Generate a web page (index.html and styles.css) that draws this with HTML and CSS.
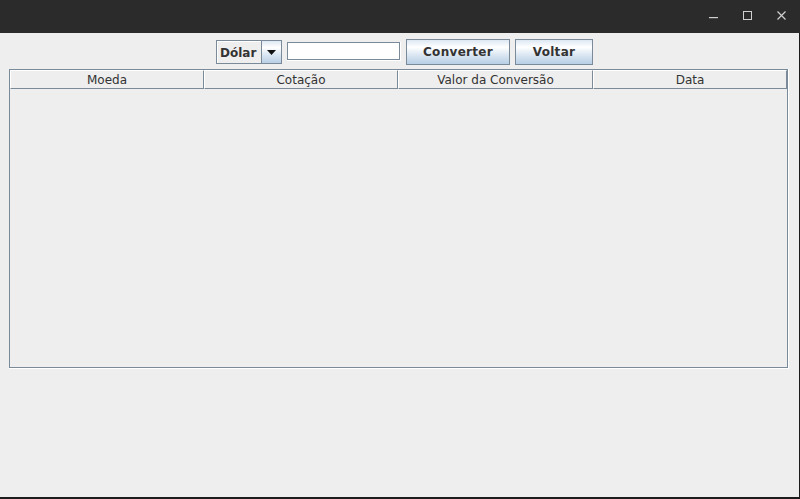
FILE: index.html
```html
<!DOCTYPE html>
<html lang="pt">
<head>
<meta charset="utf-8">
<title>Conversor</title>
<link rel="stylesheet" href="styles.css">
</head>
<body>
<div class="window">
  <div class="titlebar">
    <div class="ctl">
      <svg width="9" height="9" viewBox="0 0 9 9"><rect x="0" y="6" width="9" height="1.2" fill="#cfcfcf"/></svg>
    </div>
    <div class="ctl">
      <svg width="9" height="9" viewBox="0 0 9 9"><rect x="0.5" y="0.5" width="8" height="8" fill="none" stroke="#cfcfcf" stroke-width="1"/></svg>
    </div>
    <div class="ctl">
      <svg width="9" height="9" viewBox="0 0 9 9"><path d="M0.5 0.5 L8.5 8.5 M8.5 0.5 L0.5 8.5" stroke="#cfcfcf" stroke-width="1.2" fill="none"/></svg>
    </div>
  </div>
  <div class="content">
    <div class="toolbar">
      <div class="combo">
        <span class="combo-text">Dólar</span>
        <span class="combo-btn"><svg width="9" height="5" viewBox="0 0 9 5"><path d="M0 0 H9 L4.5 5 Z" fill="#111"/></svg></span>
      </div>
      <div class="field"><div class="field-inner"></div></div>
      <button class="btn btn-conv">Converter</button>
      <button class="btn btn-volt">Voltar</button>
    </div>
    <div class="scroll">
      <div class="scroll-inner">
        <div class="thead">
          <div class="th">Moeda</div>
          <div class="th">Cotação</div>
          <div class="th">Valor da Conversão</div>
          <div class="th">Data</div>
        </div>
        <div class="tbody"></div>
      </div>
    </div>
  </div>
</div>
</body>
</html>
```

FILE: styles.css
```css
html, body {
  margin: 0;
  padding: 0;
  background: #1c1c1c;
}
.window {
  width: 800px;
  height: 499px;
  background: #1c1c1c;
  display: flex;
  flex-direction: column;
  font-family: "DejaVu Sans", sans-serif;
  font-size: 12px;
  color: #333333;
}
.titlebar {
  height: 33px;
  background: #2b2b2b;
  display: flex;
  justify-content: flex-end;
  align-items: flex-start;
  padding-right: 2px;
}
.ctl {
  width: 34px;
  height: 33px;
  display: flex;
  justify-content: center;
  padding-top: 11px;
  box-sizing: border-box;
}
.ctl svg { display: block; }
.content {
  width: 799px;
  height: 464px;
  background: #eeeeee;
}
.toolbar {
  height: 36px;
  box-sizing: border-box;
  padding-top: 6px;
  padding-left: 10px;
  display: flex;
  justify-content: center;
  align-items: flex-start;
  gap: 5px;
}
.combo {
  margin-top: 1px;
  width: 66px;
  height: 24px;
  box-sizing: border-box;
  border: 1px solid #7a8a99;
  display: flex;
  background: #eeeeee;
}
.combo-text {
  flex: 1;
  display: flex;
  align-items: center;
  padding-left: 2px;
  font-weight: bold;
  font-size: 12px;
  color: #333333;
  border-top: 1px solid #ffffff;
  border-left: 1px solid #ffffff;
}
.combo-btn {
  width: 19px;
  border-left: 1px solid #7a8a99;
  display: flex;
  align-items: center;
  justify-content: center;
  background: linear-gradient(to bottom, #dde8f3 0%, #ffffff 30%, #dde8f3 60%, #b8cfe5 100%);
}
.combo-btn svg { display: block; }
.field {
  margin-top: 3px;
  width: 114px;
  height: 19px;
  box-sizing: border-box;
  border-right: 1px solid #ffffff;
  border-bottom: 1px solid #ffffff;
}
.field-inner {
  height: 100%;
  box-sizing: border-box;
  border: 1px solid #7a8a99;
  background: #ffffff;
}
.btn {
  height: 26px;
  margin: 0;
  padding: 0;
  box-sizing: border-box;
  border: 1px solid #7a8a99;
  background: linear-gradient(to bottom, #dde8f3 0%, #ffffff 30%, #dde8f3 60%, #b8cfe5 100%);
  font-family: "DejaVu Sans", sans-serif;
  font-size: 12px;
  font-weight: bold;
  color: #333333;
  letter-spacing: 0.3px;
}
.btn-conv { width: 104px; }
.btn-volt { width: 78px; }
.scroll {
  margin-left: 9px;
  width: 780px;
  height: 300px;
  box-sizing: border-box;
  border-right: 1px solid #ffffff;
  border-bottom: 1px solid #ffffff;
}
.scroll-inner {
  height: 100%;
  box-sizing: border-box;
  border: 1px solid #7a8a99;
  display: flex;
  flex-direction: column;
}
.thead {
  display: grid;
  grid-template-columns: 194px 194px 195px 194px;
  height: 19px;
}
.th {
  box-sizing: border-box;
  border-top: 1px solid #ffffff;
  border-left: 1px solid #ffffff;
  border-right: 1px solid #7a8a99;
  border-bottom: 1px solid #7a8a99;
  display: flex;
  align-items: center;
  justify-content: center;
  font-size: 12px;
  color: #333333;
  padding-top: 1px;
}
.tbody {
  flex: 1;
}
```
